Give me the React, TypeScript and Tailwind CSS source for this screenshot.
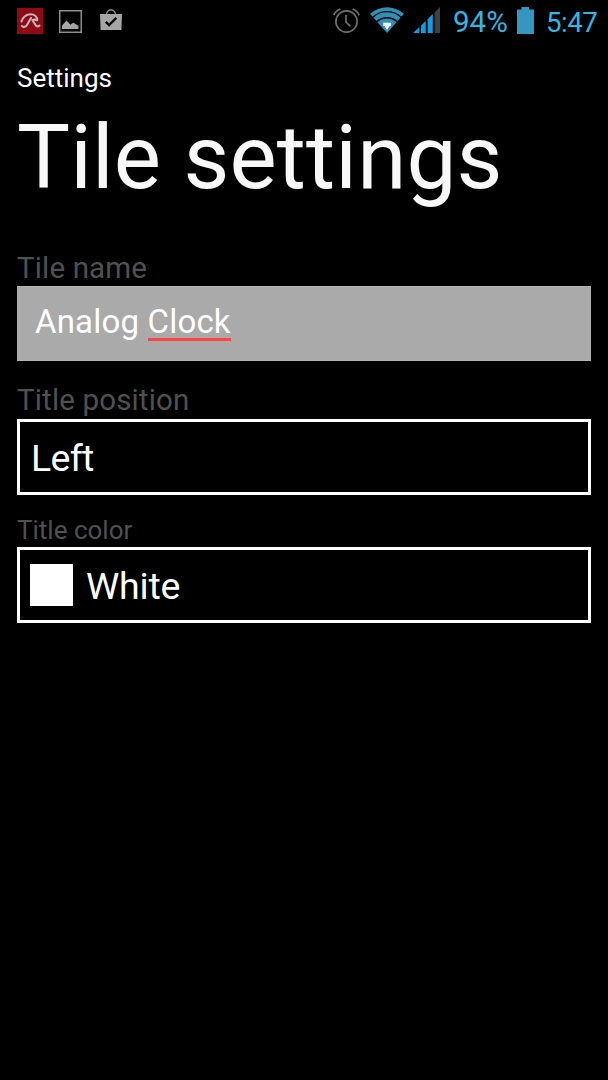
import React from 'react';

const AviraIcon: React.FC = () => (
  <svg width="26" height="26" viewBox="0 0 26 26" fill="none">
    <rect width="26" height="26" fill="#8f0a14" />
    <path d="M4.500 13.500C5.500 9 9.500 6.300 13.500 6.300c4 0 6.700 2.500 6.700 6-1.500-.8-3.200-.8-4.700 0l3.200 5c1 1.600 2.500 1.500 3.800.2M14 10 9.800 17.200c-1.200 2-4 2.200-4.800.8" stroke="#c4b4b4" strokeWidth="2.100" strokeLinecap="round" strokeLinejoin="round" />
  </svg>
);

const GalleryIcon: React.FC = () => (
  <svg width="23" height="23" viewBox="0 0 23 23">
    <rect x=".75" y=".75" width="21.5" height="21.5" fill="none" stroke="#8e8e8e" strokeWidth="1.5" />
    <path d="M3 19v-3.500l4.500-5 4 4.200 2.500-2 2.200 1L19.500 16v3z" fill="#a6a6a6" />
  </svg>
);

const StoreIcon: React.FC = () => (
  <svg width="22" height="22" viewBox="0 0 22 22">
    <path d="M6.500 6C6.500-.6 15.500-.6 15.500 6" fill="none" stroke="#8e8e8e" strokeWidth="1.500" />
    <path d="M0 5h22l-.6 16H.6z" fill="#a6a6a6" />
    <path d="m5.800 12.800 3.300 3.300 7.200-7.200" fill="none" stroke="#0a0a0a" strokeWidth="2.400" />
  </svg>
);

const AlarmIcon: React.FC = () => (
  <svg width="27" height="26" viewBox="0 0 27 26" fill="none" stroke="#6e6e6e" strokeWidth="1.700">
    <circle cx="13.500" cy="14.500" r="10.600" />
    <path d="M13 8v7l4.300 4.300M.8 8.200C2 5.400 4.200 3.200 7.400 2M19.600 2c3.200 1.200 5.400 3.400 6.600 6.200" />
  </svg>
);

const WifiIcon: React.FC = () => (
  <svg width="34" height="26" viewBox="0 0 34 26">
    <path d="M0 6.800C9.800-1.900 24.200-1.900 34 6.800L17 26z" fill="#2f8fb8" />
    <path d="M2.800 10.200C11.200 2.800 22.800 2.800 31.200 10.200M6.600 14.800c6.300-5.400 14.500-5.400 20.800 0" fill="none" stroke="#000" strokeWidth="1.400" />
    <path d="M13.300 15.800h7.600v3.200h-1.300l-2.500 4-2.400-4h-1.400z" fill="#fff" />
  </svg>
);

const SignalIcon: React.FC = () => (
  <svg width="27" height="26" viewBox="0 0 27 26">
    <path d="M0 26 6.400 20v6z" fill="#149be0" />
    <path d="M8 18.500 12.800 14v12H8z" fill="#149be0" />
    <path d="M14.600 12.300 19.800 7v19h-5.200z" fill="#149be0" />
    <path d="M21.600 5.300 27 0v26h-5.400z" fill="#404040" />
  </svg>
);

const BatteryIcon: React.FC = () => (
  <svg width="17" height="27" viewBox="0 0 17 27">
    <path d="M4.500 0h7.500v2.500h5V27H0V2.500h4.500z" fill="#3596c0" />
  </svg>
);

const StatusBar: React.FC = () => (
  <div className="flex h-[42px] items-start pl-[17px] pr-[10px]">
    <div className="mt-2 flex items-start">
      <AviraIcon />
      <div className="ml-4 mt-[2px]"><GalleryIcon /></div>
      <div className="ml-[18px] mt-px"><StoreIcon /></div>
    </div>
    <div className="ml-auto flex items-start text-[#33b5e5]">
      <div className="mt-[7px]"><AlarmIcon /></div>
      <div className="ml-[10px] mt-[7px]"><WifiIcon /></div>
      <div className="ml-[9px] mt-[7px]"><SignalIcon /></div>
      <div className="ml-[13px] mt-1 w-[56px] whitespace-nowrap text-[29.5px] leading-9">94%</div>
      <div className="ml-2 mt-[7px]"><BatteryIcon /></div>
      <div className="ml-[12px] mt-[5px] w-[52px] whitespace-nowrap text-[27.7px] leading-9 tracking-[-0.5px]">5:47</div>
    </div>
  </div>
);

const App: React.FC = () => {
  return (
    <div className="h-[1080px] w-[608px] overflow-hidden bg-black font-['Roboto',sans-serif] text-white">
      <StatusBar />

      <div className="px-[17px] pt-5">
        <div className="text-[26px] leading-8">Settings</div>
        <h1 className="mt-[14px] whitespace-nowrap text-[89px] leading-[100px] tracking-[0.15px] text-[#f8f8f8]">Tile settings</h1>

        <div className="mt-[42px] text-[29.5px] leading-9 tracking-[0.15px] text-[#505050]">Tile name</div>
        <div className="h-[75px] border-y border-[#b4b4b4] bg-[#aaaaaa] pl-[18px] pt-[15px] text-[33px] leading-10 tracking-[0.18px]">
          Analog <span className="inline-block h-[39px] border-b-[3px] border-[#ff4444]">Clock</span>
        </div>

        <div className="mt-[21px] text-[29.5px] leading-9 tracking-[0.15px] text-[#505050]">Title position</div>
        <div className="mt-px flex h-[76px] items-center border-[3px] border-white pl-[11px] pt-px text-[37.5px] leading-10 tracking-[-0.7px]">Left</div>

        <div className="mt-[19px] text-[26px] leading-8 text-[#505050]">Title color</div>
        <div className="mt-px flex h-[76px] items-center border-[3px] border-white pl-[10px] text-[37.5px] leading-10 tracking-[-0.2px]">
          <span className="mr-[13px] h-[42px] w-[43px] bg-white"></span>
          <span className="pt-px">White</span>
        </div>
      </div>
    </div>
  );
};

export default App;
